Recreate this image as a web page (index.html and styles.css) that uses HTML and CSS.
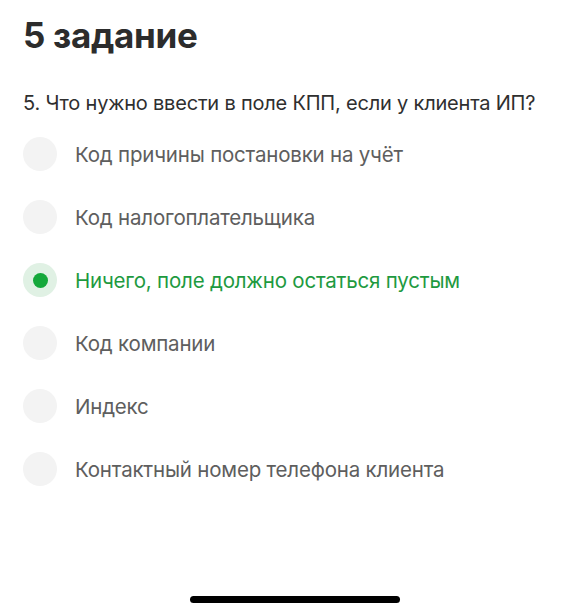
FILE: index.html
```html
<!DOCTYPE html>
<html lang="ru">
<head>
<meta charset="utf-8">
<link rel="stylesheet" href="styles.css">
</head>
<body>
<main class="page">
  <h1 class="title">5 задание</h1>
  <p class="question">5. Что нужно ввести в поле КПП, если у клиента ИП?</p>
  <ul class="options">
    <li class="option"><span class="radio"></span><span class="label">Код причины постановки на учёт</span></li>
    <li class="option"><span class="radio"></span><span class="label">Код налогоплательщика</span></li>
    <li class="option selected"><span class="radio"><span class="dot"></span></span><span class="label">Ничего, поле должно остаться пустым</span></li>
    <li class="option"><span class="radio"></span><span class="label">Код компании</span></li>
    <li class="option"><span class="radio"></span><span class="label">Индекс</span></li>
    <li class="option"><span class="radio"></span><span class="label">Контактный номер телефона клиента</span></li>
  </ul>
  <div class="home-bar"><span class="home-indicator"></span></div>
</main>
</body>
</html>
```
FILE: styles.css
```css
* { box-sizing: border-box; }
html, body { margin: 0; padding: 0; background: #ffffff; }
body { font-family: Inter, Roboto, "Noto Sans", sans-serif; }
.page {
  width: 562px;
  height: 615px;
  padding: 14px 23px 0 23px;
  display: flex;
  flex-direction: column;
}
.title {
  margin: 0;
  font-size: 35px;
  line-height: 42px;
  font-weight: 700;
  color: #2c2c2c;
  letter-spacing: -0.3px;
}
.question {
  margin: 34px 0 0 0;
  font-size: 20px;
  line-height: 26px;
  color: #2f2f2f;
  letter-spacing: -0.2px;
  white-space: nowrap;
}
.options {
  list-style: none;
  margin: 21px 0 0 0;
  padding: 0;
  display: flex;
  flex-direction: column;
  gap: 29px;
}
.option {
  display: flex;
  align-items: center;
  gap: 18px;
  height: 34px;
}
.radio {
  width: 34px;
  height: 34px;
  border-radius: 50%;
  background: #f3f3f3;
  flex: 0 0 34px;
  display: flex;
  align-items: center;
  justify-content: center;
}
.label {
  font-size: 20.5px;
  color: #5e5e5e;
  letter-spacing: -0.2px;
  white-space: nowrap;
}
.selected .radio { background: #e0f1e4; }
.dot {
  width: 15px;
  height: 15px;
  border-radius: 50%;
  background: #14a83a;
}
.selected .label { color: #1e9a3f; }
.home-bar {
  margin-top: auto;
  height: 19px;
  padding-left: 28px;
  display: flex;
  justify-content: center;
}
.home-indicator {
  width: 210px;
  height: 7px;
  border-radius: 4px;
  background: #000000;
}
```
